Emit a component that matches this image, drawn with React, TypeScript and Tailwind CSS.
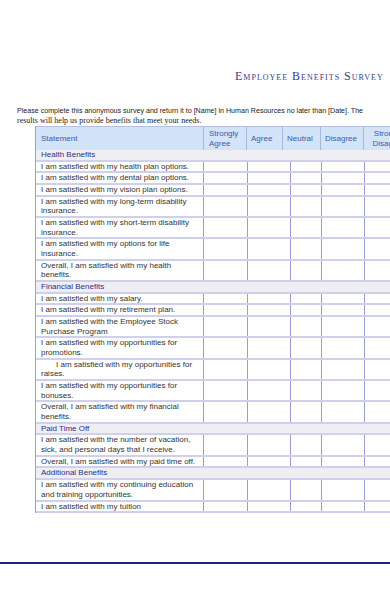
type Row = { lines: string[]; indent?: boolean }
type Section = { title: string; rows: Row[] }

const sections: Section[] = [
  {
    title: 'Health Benefits',
    rows: [
      { lines: ['I am satisfied with my health plan options.'] },
      { lines: ['I am satisfied with my dental plan options.'] },
      { lines: ['I am satisfied with my vision plan options.'] },
      { lines: ['I am satisfied with my long-term disability', 'insurance.'] },
      { lines: ['I am satisfied with my short-term disability', 'insurance.'] },
      { lines: ['I am satisfied with my options for life', 'insurance.'] },
      { lines: ['Overall, I am satisfied with my health', 'benefits.'] },
    ],
  },
  {
    title: 'Financial Benefits',
    rows: [
      { lines: ['I am satisfied with my salary.'] },
      { lines: ['I am satisfied with my retirement plan.'] },
      { lines: ['I am satisfied with the Employee Stock', 'Purchase Program'] },
      { lines: ['I am satisfied with my opportunities for', 'promotions.'] },
      { lines: ['I am satisfied with my opportunities for', 'raises.'], indent: true },
      { lines: ['I am satisfied with my opportunities for', 'bonuses.'] },
      { lines: ['Overall, I am satisfied with my financial', 'benefits.'] },
    ],
  },
  {
    title: 'Paid Time Off',
    rows: [
      { lines: ['I am satisfied with the number of vacation,', 'sick, and personal days that I receive.'] },
      { lines: ['Overall, I am satisfied with my paid time off.'] },
    ],
  },
  {
    title: 'Additional Benefits',
    rows: [
      { lines: ['I am satisfied with my continuing education', 'and training opportunities.'] },
      { lines: ['I am satisfied with my tuition'] },
    ],
  },
]

const bodyCols = 'grid grid-cols-[167px_44px_43px_31px_43px_50px]'
const headCols = 'grid grid-cols-[167px_43px_36px_38px_43px_50px]'

function SurveyRow({ row }: { row: Row }) {
  return (
    <div className={`${bodyCols} border-b-2 border-[#cfcfee]`}>
      <div className="pl-[5px] leading-[9.67px] text-[#333] whitespace-nowrap">
        {row.lines.map((l, i) => (
          <div key={i} className={i === 0 && row.indent ? 'pl-[15px]' : ''}>
            {l}
          </div>
        ))}
      </div>
      {/* answer cells */}
      <div className="border-l border-[#9a9ad4]" />
      <div className="border-l border-[#9a9ad4]" />
      <div className="border-l border-[#9a9ad4]" />
      <div className="border-l border-[#9a9ad4]" />
      <div className="border-l border-[#9a9ad4]" />
    </div>
  )
}

export default function App() {
  return (
    <div className="w-[390px] h-[600px] overflow-hidden bg-white">
      {/* Title */}
      <div
        className="pt-[69px] pl-[235px] text-[12px] leading-[15px] tracking-[1px] text-[#3b3b8c] whitespace-nowrap [font-variant:small-caps]"
        style={{ fontFamily: '"Liberation Serif", "Times New Roman", serif' }}
      >
        Employee Benefits Survey
      </div>

      {/* Intro */}
      <div className="mt-[23px] pl-[17px] text-[#222] whitespace-nowrap">
        <div
          className="text-[7.1px] leading-[9px]"
          style={{ fontFamily: '"Liberation Sans", Arial, sans-serif' }}
        >
          Please complete this anonymous survey and return it to [Name] in Human Resources no later than [Date]. The
        </div>
        <div
          className="text-[8px] leading-[9px]"
          style={{ fontFamily: '"Liberation Serif", "Times New Roman", serif' }}
        >
          results will help us provide benefits that meet your needs.
        </div>
      </div>

      {/* Table */}
      <div
        className="mt-px ml-[35px] w-[400px] border-l border-[#9c9cd4] text-[8px]"
        style={{ fontFamily: '"Liberation Sans", Arial, sans-serif' }}
      >
        <div className={`${headCols} h-[24px] bg-[#d3e4f8] text-[#3c5aa8] border-t border-[#b4bedf] leading-[10px]`}>
          <div className="pl-[5px] flex items-center">Statement</div>
          <div className="pl-[5px] flex flex-col justify-center border-l border-[#a9b6e0]">
            <span>Strongly</span>
            <span>Agree</span>
          </div>
          <div className="pl-[4px] flex items-center border-l border-[#a9b6e0]">Agree</div>
          <div className="pl-[4px] flex items-center border-l border-[#a9b6e0]">Neutral</div>
          <div className="pl-[4px] flex items-center border-l border-[#a9b6e0]">Disagree</div>
          <div className="flex flex-col justify-center items-center border-l border-[#a9b6e0]">
            <span>Strongly</span>
            <span>Disagree</span>
          </div>
        </div>

        {sections.map((s) => (
          <div key={s.title}>
            <div className="bg-[#efeff3] border-b-2 border-[#cfcfee] pl-[5px] leading-[9.67px] text-[#2e2e85]">
              {s.title}
            </div>
            {s.rows.map((r, i) => (
              <SurveyRow key={i} row={r} />
            ))}
          </div>
        ))}
      </div>

      {/* Footer rule */}
      <div className="mt-[49px] h-[2px] bg-[#22227a]" />
    </div>
  )
}
